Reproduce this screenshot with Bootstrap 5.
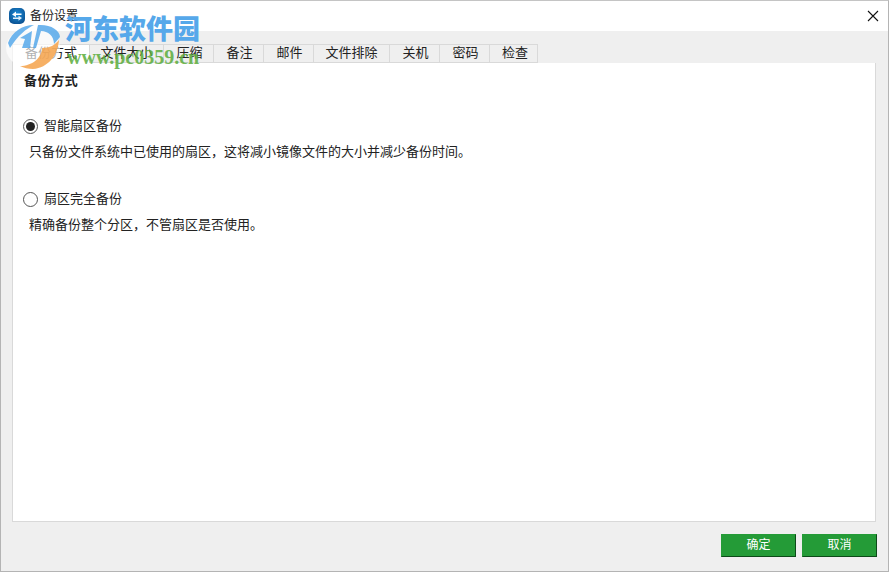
<!doctype html>
<html lang="zh">
<head>
  <meta charset="utf-8">
  <meta name="viewport" content="width=device-width, initial-scale=1">
  <title>备份设置</title>
  <link href="https://cdn.jsdelivr.net/npm/bootstrap@5.3.0/dist/css/bootstrap.min.css" rel="stylesheet">
  <style>
    html, body { height: 100%; }
    body {
      font-family: "Liberation Sans", "Noto Sans CJK SC", sans-serif;
      font-size: 12px;
      color: #222;
      background: #efefef;
      overflow: hidden;
    }
    .app-window {
      position: relative;
      height: 572px;
      border: 1px solid #b4b4b4;
      border-top-color: #c4c4c4;
    }
    .title-bar { height: 30px; padding-left: 8px; background: #fff; font-size: 12px; }
    .title-bar svg { flex: none; }
    .title-text { margin-left: 5px; }
    .close-x { margin-right: 9px; line-height: 0; }
    .tab-strip { padding: 13px 12px 0 11px; }
    .tab-strip .nav-tabs { border: 0; flex-wrap: nowrap; }
    .tab-strip .nav-link {
      height: 19px;
      margin: 0;
      padding: 0 0 2px 2px;
      display: flex;
      align-items: center;
      justify-content: center;
      font-size: 13px;
      color: #222;
      background: #efefef;
      border: 1px solid #d9d9d9;
      border-left: 0;
      border-radius: 0;
    }
    .tab-strip .nav-link.active { padding-left: 0; background: #fff; color: #222; border-color: #d9d9d9; border-bottom: 0; border-left: 1px solid #d9d9d9; }
    .tab-strip .nav-link.tab-w74, .tab-strip .nav-link.tab-w76 { padding-left: 0; }
    .tab-strip .nav-link.tab-w48 { padding-left: 3px; }
    .tab-w78 { width: 78px; }
    .tab-w74 { width: 74px; }
    .tab-w50 { width: 50px; }
    .tab-w76 { width: 76px; }
    .tab-w48 { width: 48px; }
    .settings-panel {
      height: 459px;
      padding: 9px 11px 11px;
      background: #fff;
      border: 1px solid #d9d9d9;
      border-top: 0;
    }
    .panel-heading { font-size: 13px; font-weight: 700; line-height: 17px; letter-spacing: .6px; margin: 0 0 28px; }
    .choice-row { gap: 6px; height: 18px; margin-left: -1px; font-size: 13px; }
    .radio-mark {
      width: 15px; height: 15px; flex: none;
      border: 1px solid #555; border-radius: 50%;
      background: #fff;
      display: flex; align-items: center; justify-content: center;
    }
    .radio-mark.is-on::after { content: ""; width: 9px; height: 9px; border-radius: 50%; background: #222; }
    .choice-note { margin: 8px 0 29px 5px; line-height: 18px; font-size: 13px; }
    .dialog-foot { padding: 12px 11px 0 0; gap: 6px; }
    .foot-btn {
      width: 75px; height: 23px; padding: 0;
      font-size: 12px; line-height: 21px;
      color: #fff;
      background: #249b37;
      border: 1px solid #249b37;
      border-right-color: #0c4a18;
      border-bottom-color: #0c4a18;
      border-radius: 0;
    }
    .foot-btn:hover { color: #fff; background: #249b37; }
    /* watermark over the window */
    .wm-logo { position: absolute; left: -1px; top: 9px; }
    .wm-name {
      position: absolute; left: 64px; top: 11px;
      font-family: "Liberation Serif", "Noto Sans CJK SC", serif;
      font-size: 27px; font-weight: 900; line-height: 36px;
      color: #56a8ea; white-space: nowrap;
    }
    .wm-url {
      position: absolute; left: 66px; top: 45px;
      font-family: "Liberation Serif", serif;
      font-size: 20px; font-weight: 700; line-height: 22px;
      color: #5cad3c; opacity: .85; white-space: nowrap;
    }
  </style>
</head>
<body>
  <div class="app-window">
    <div class="title-bar d-flex align-items-center">
      <svg width="16" height="16" viewBox="0 0 16 16">
        <defs>
          <radialGradient id="iconFill" cx=".5" cy=".4" r=".65">
            <stop offset="0" stop-color="#1c8fdc"/>
            <stop offset="1" stop-color="#0a4f8f"/>
          </radialGradient>
        </defs>
        <rect width="16" height="16" rx="5" fill="url(#iconFill)"/>
        <path d="M3 6.5 L7 3.5 V5.5 H12.5 V7 H7 V9 Z" fill="#fff"/>
        <path d="M13 10 L9.5 12.8 V11 H4 V9.5 H9.5 V7.8 Z" fill="#dff0fb"/>
      </svg>
      <span class="title-text flex-grow-1">备份设置</span>
      <span class="close-x">
        <svg width="12" height="12" viewBox="0 0 12 12"><path d="M1 1 L11 11 M11 1 L1 11" stroke="#111" stroke-width="1.1" fill="none"/></svg>
      </span>
    </div>

    <div class="tab-strip">
      <ul class="nav nav-tabs">
        <li class="nav-item"><a class="nav-link active tab-w78" href="#">备份方式</a></li>
        <li class="nav-item"><a class="nav-link tab-w74" href="#">文件大小</a></li>
        <li class="nav-item"><a class="nav-link tab-w50" href="#">压缩</a></li>
        <li class="nav-item"><a class="nav-link tab-w50" href="#">备注</a></li>
        <li class="nav-item"><a class="nav-link tab-w50" href="#">邮件</a></li>
        <li class="nav-item"><a class="nav-link tab-w76" href="#">文件排除</a></li>
        <li class="nav-item"><a class="nav-link tab-w50" href="#">关机</a></li>
        <li class="nav-item"><a class="nav-link tab-w50" href="#">密码</a></li>
        <li class="nav-item"><a class="nav-link tab-w48" href="#">检查</a></li>
      </ul>
      <div class="settings-panel">
        <h6 class="panel-heading">备份方式</h6>
        <div class="choice-row d-flex align-items-center"><span class="radio-mark is-on"></span><span>智能扇区备份</span></div>
        <p class="choice-note">只备份文件系统中已使用的扇区，这将减小镜像文件的大小并减少备份时间。</p>
        <div class="choice-row d-flex align-items-center"><span class="radio-mark"></span><span>扇区完全备份</span></div>
        <p class="choice-note">精确备份整个分区，不管扇区是否使用。</p>
      </div>
    </div>

    <div class="dialog-foot d-flex justify-content-end">
      <button type="button" class="btn foot-btn">确定</button>
      <button type="button" class="btn foot-btn">取消</button>
    </div>

    <svg class="wm-logo" width="70" height="60" viewBox="0 0 70 60">
      <ellipse cx="33" cy="38" rx="27" ry="21" fill="#fff" opacity=".65"/>
      <path d="M8 33 C12 22 22 15 34 15 C26 19 18 25 10 38 Z" fill="#56a8ea" opacity=".85"/>
      <path d="M20 28 L32 21 L30 38 H22 L25 29 Z" fill="#56a8ea" opacity=".85"/>
      <path d="M38 15 C50 14 60 20 60 27 L54 34 C54 26 48 21 41 21 L36 38 H33 Z" fill="#56a8ea" opacity=".85"/>
      <path d="M59 30 C58 45 48 58 33 59 C28 59 24 58 20 56 C32 56 42 48 42 38 C50 38 55 35 59 30 Z" fill="#f5a24a" opacity=".85"/>
    </svg>
    <div class="wm-name">河东软件园</div>
    <div class="wm-url">www.pc0359.cn</div>
  </div>

  <script src="https://cdn.jsdelivr.net/npm/bootstrap@5.3.0/dist/js/bootstrap.bundle.min.js"></script>
</body>
</html>
